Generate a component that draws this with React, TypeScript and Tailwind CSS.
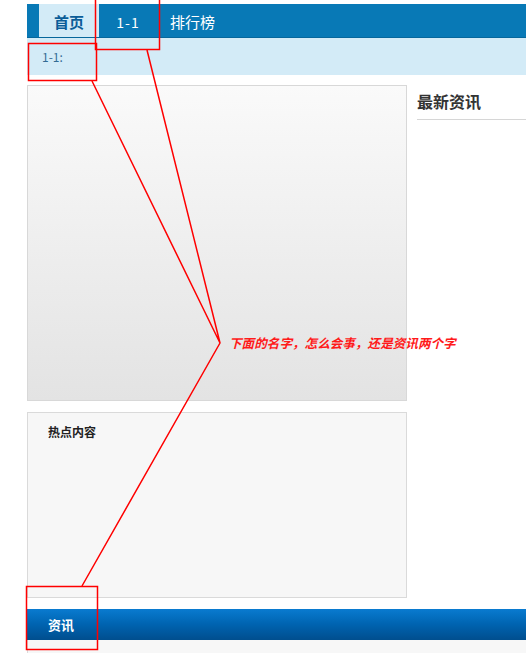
const cjk = { fontFamily: '"SimSun", "Noto Sans CJK SC", "Liberation Sans", sans-serif' }

function Annotations() {
  return (
    <div className="pointer-events-none absolute inset-0">
      <svg width="526" height="653" className="absolute left-0 top-0" fill="none" stroke="#ff0000" strokeWidth="1.5">
        <rect x="95.5" y="-1" width="64" height="50.5" />
        <rect x="28.5" y="43.5" width="68" height="37" />
        <rect x="26.5" y="586.5" width="71" height="63" />
        <path d="M92 81 L220 343 M147 50 L220 343 L82 586" />
      </svg>
      <div
        className="absolute left-[229px] top-[335px] text-[12.6px] font-bold italic leading-4 text-[#ff1a1a]"
        style={cjk}
      >
        下面的名字，怎么会事，还是资讯两个字
      </div>
    </div>
  )
}

export default function App() {
  return (
    <div className="relative h-[653px] w-[526px] overflow-hidden bg-white" style={cjk}>
      <div className="ml-[27px] w-[560px] pt-[4px]">
        {/* top nav */}
        <div className="flex h-[34px] items-stretch border-b border-[#06679c] bg-[#0879b6] pl-[12px]">
          <div className="flex w-[60px] items-center justify-center bg-[#d3ebf7] pt-[3px] text-[15px] font-bold text-[#0b5d98]">
            首页
          </div>
          <div className="flex w-[58px] items-center justify-center pt-[3px] text-[14px] tracking-[1px] text-white">
            1-1
          </div>
          <div className="flex items-center px-[13px] pt-[3px] text-[15px] text-white">排行榜</div>
        </div>
        {/* sub bar */}
        <div className="flex h-[37px] items-center bg-[#d3ebf7] pl-[15px] text-[12px] text-[#336b94]">1-1:</div>

        <div className="mt-[10px] flex gap-[10px]">
          <div className="flex w-[380px] flex-col gap-[11px]">
            <div className="h-[316px] border border-[#d8d8d8] bg-gradient-to-b from-[#fafafa] to-[#e3e3e3]" />
            <div className="h-[186px] border border-[#dadada] bg-[#f7f7f7] px-[20px] pt-[10px]">
              <div className="text-[12px] font-bold text-[#222]">热点内容</div>
            </div>
          </div>
          <div className="flex-1">
            <div className="mt-[4px] border-b border-[#d6d6d6] pb-[6px] text-[16px] font-bold text-[#333]">
              最新资讯
            </div>
          </div>
        </div>

        {/* bottom bar */}
        <div className="mt-[11px] flex h-[31px] items-center bg-gradient-to-b from-[#0a7bd0] via-[#0063b0] to-[#004e8e] pl-[21px] text-[13px] font-bold text-white">
          资讯
        </div>
        <div className="h-[20px] border-l border-[#dadada] bg-[#f7f7f7]" />
      </div>
      <Annotations />
    </div>
  )
}
